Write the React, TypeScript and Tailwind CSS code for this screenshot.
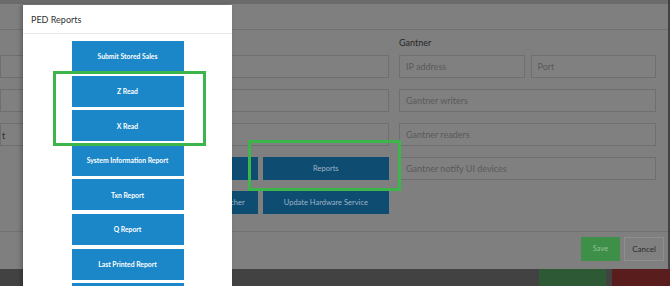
import React from 'react';

const reports = [
  'Submit Stored Sales',
  'Z Read',
  'X Read',
  'System Information Report',
  'Txn Report',
  'Q Report',
  'Last Printed Report',
  '',
];

const font = { fontFamily: 'Lato, "Open Sans", sans-serif' };

function Field({ placeholder, className = '', children }: { placeholder?: string; className?: string; children?: React.ReactNode }) {
  return (
    <div
      className={`h-[23px] border border-[#6f6f6f] bg-[#808080] flex items-center px-[6px] text-[9px] text-[#5a5a5a] whitespace-nowrap overflow-hidden ${className}`}
    >
      {placeholder}
      {children}
    </div>
  );
}

function DarkButton({ label }: { label: string }) {
  return (
    <div className="h-[23px] bg-[#0f4c72] flex items-center justify-center text-[7.5px] text-[#9db5c5] whitespace-nowrap overflow-hidden">
      {label}
    </div>
  );
}

export default function App() {
  return (
    <div className="relative w-[670px] h-[286px] overflow-hidden bg-[#424242]" style={font}>
      {/* dimmed settings page */}
      <div className="w-[668px] h-[269px] bg-[#7f7f7f] flex flex-col">
        <div className="h-[4px] bg-[#6b6b6b]" />
        <div className="h-[26px] border-b border-[#717171]" />

        <div className="h-[201px] flex gap-[10px] pr-[12px]">
          {/* left column */}
          <div className="w-[389px] shrink-0 flex flex-col gap-[11px] pt-[25px]">
            <Field />
            <Field />
            <Field className="pl-[1px] items-end pb-[3px]">
              <span className="text-[#303030]">t</span>
            </Field>
            <div className="grid grid-cols-3 gap-[5px]">
              <div />
              <DarkButton label="Sync Terminal" />
              <DarkButton label="Reports" />
            </div>
            <div className="grid grid-cols-3 gap-[5px]">
              <div />
              <DarkButton label="Synchronise Gift Card Voucher" />
              <DarkButton label="Update Hardware Service" />
            </div>
          </div>

          {/* Gantner column */}
          <div className="flex-1 flex flex-col">
            <div className="h-[25px] pt-[1px] text-[9px] text-[#262626] flex items-center">Gantner</div>
            <div className="flex flex-col gap-[11px]">
              <div className="grid grid-cols-2 gap-[6px]">
                <Field placeholder="IP address" />
                <Field placeholder="Port" />
              </div>
              <Field placeholder="Gantner writers" />
              <Field placeholder="Gantner readers" />
              <Field placeholder="Gantner notify UI devices" />
            </div>
          </div>
        </div>

        <div className="flex-1 border-t border-[#717171] flex justify-end items-start gap-[4px] pt-[5px] pr-[4px]">
          <div className="w-[39px] h-[24px] bg-[#3e8f47] flex items-center justify-center text-[7.5px] text-[#93c49a]">
            Save
          </div>
          <div className="w-[40px] h-[24px] bg-[#808080] border border-[#8e8e8e] flex items-center justify-center text-[8px] text-[#2e2e2e]">
            Cancel
          </div>
        </div>
      </div>

      {/* bottom strip */}
      <div className="flex h-[17px] pl-[539px] gap-[6px]">
        <div className="w-[67px] bg-[#2d5a34]" />
        <div className="flex-1 bg-[#5a1d1d]" />
      </div>

      {/* PED Reports modal */}
      <div className="absolute left-[23px] top-[5px] w-[209px] h-[290px] bg-white shadow-[-2px_0_4px_rgba(0,0,0,0.25)]">
        <div className="h-[29px] border-b border-[#e6e6e6] flex items-center pl-[8px] pt-[1px] text-[9px] text-[#333333]">
          PED Reports
        </div>
        <div className="flex flex-col items-center gap-[3.6px] pt-[7px]">
          {reports.map((r, i) => (
            <div
              key={i}
              className="w-[112px] h-[31px] shrink-0 bg-[#1b87c8] flex items-center justify-center text-[6.8px] font-bold text-white whitespace-nowrap"
            >
              {r}
            </div>
          ))}
        </div>
      </div>

      {/* annotation boxes */}
      <div className="absolute left-[53px] top-[71px] w-[153px] h-[75px] border-[3px] border-[#3cb54b]" />
      <div className="absolute left-[248px] top-[140px] w-[153px] h-[51px] border-[3px] border-[#3cb54b]" />
    </div>
  );
}
